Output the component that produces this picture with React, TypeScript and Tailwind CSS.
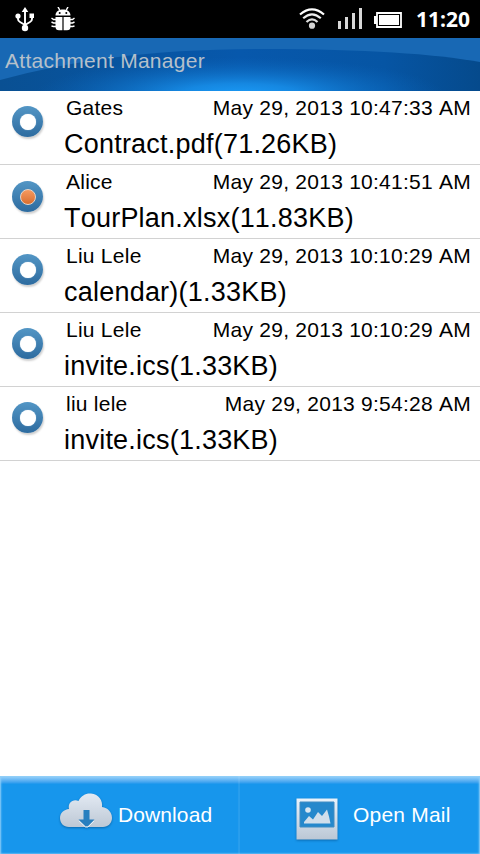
const items = [
  { from: 'Gates', date: 'May 29, 2013 10:47:33 AM', file: 'Contract.pdf(71.26KB)' },
  { from: 'Alice', date: 'May 29, 2013 10:41:51 AM', file: 'TourPlan.xlsx(11.83KB)', selected: true },
  { from: 'Liu Lele', date: 'May 29, 2013 10:10:29 AM', file: 'calendar)(1.33KB)' },
  { from: 'Liu Lele', date: 'May 29, 2013 10:10:29 AM', file: 'invite.ics(1.33KB)' },
  { from: 'liu lele', date: 'May 29, 2013 9:54:28 AM', file: 'invite.ics(1.33KB)' },
];

function UsbIcon() {
  return (
    <svg className="ml-[15px]" width="20" height="25" viewBox="0 0 20 25" fill="none" stroke="white" strokeWidth="1.9">
      <path d="M10 4v18M3 9v3q0 2 2 3l5 3M17 9v3q0 2-2 3l-5 3" />
      <path d="M10 0l3.300 5H6.700zM14.500 6.500h4.500v4.500h-4.500z" fill="white" stroke="none" />
      <circle cx="3" cy="9" r="2.600" fill="white" stroke="none" />
      <circle cx="10" cy="21" r="3.200" fill="white" stroke="none" />
    </svg>
  );
}

function BugIcon() {
  return (
    <svg className="ml-4" width="24" height="25" viewBox="0 0 24 25" fill="white">
      <path d="M4.500 8.500C4.500 4.500 8 2.500 12 2.500s7.500 2 7.500 6zM4.500 10h6.900v13.300H8a3.500 3.500 0 0 1-3.500-3.500zM12.600 10h6.900v9.800a3.500 3.500 0 0 1-3.500 3.500h-3.400z" />
      <path d="M7 0l2 3.500M17 0l-2 3.500M.5 11l2 1.500h3M.5 15l2 1h3M.5 19l2 .5h3M23.500 11l-2 1.500h-3M23.500 15l-2 1h-3M23.500 19l-2 .5h-3" fill="none" stroke="white" strokeWidth="1.500" />
      <circle cx="8.700" cy="6" r="1" fill="black" />
      <circle cx="15.300" cy="6" r="1" fill="black" />
    </svg>
  );
}

function StatusBar() {
  return (
    <header className="flex h-[38px] shrink-0 items-center bg-black">
      <UsbIcon />
      <BugIcon />
      <svg className="ml-auto" width="26" height="24" viewBox="0 0 26 24" fill="none" stroke="#eeeeee" strokeWidth="2.200">
        <path d="M1 7.500Q13-2.700 25 7.500" stroke="white" />
        <path d="M4.200 11.300Q13 3.500 21.800 11.300" />
        <path d="M7.500 15Q13 9.800 18.500 15" stroke="#dddddd" />
        <circle cx="13" cy="18.700" r="3.100" fill="#d4d4d4" stroke="none" />
      </svg>
      <svg className="ml-[13px]" width="25" height="22" viewBox="0 0 25 22">
        <path d="M0 13h3v8H0zM7 9h3v12H7zM14 5h3v16h-3zM21 0h3v21h-3z" fill="#d8d8d8" />
      </svg>
      <svg className="ml-[11px] mt-px" width="28" height="16" viewBox="0 0 28 16">
        <path d="M3 1h24v14H3z" fill="black" stroke="white" strokeWidth="1.800" />
        <path d="M0 4h3v8H0zM5 3h20v10H5z" fill="white" />
      </svg>
      <span className="ml-[14px] mr-[9px] w-[55px] whitespace-nowrap font-['Open_Sans','Noto_Sans',sans-serif] text-[21px] font-bold leading-6 text-white">11:20</span>
    </header>
  );
}

function TitleBar() {
  return (
    <div className="relative h-[53px] shrink-0 overflow-hidden bg-[#1868b4]">
      <svg className="absolute inset-0" width="480" height="53" viewBox="0 0 480 53" preserveAspectRatio="none" aria-hidden="true">
        <defs>
          <linearGradient id="band">
            <stop offset="0" stopColor="#095093" />
            <stop offset=".5" stopColor="#0758ac" />
            <stop offset=".8" stopColor="#0655a4" />
            <stop offset="1" stopColor="#054a8c" />
          </linearGradient>
          <radialGradient id="glow" gradientUnits="userSpaceOnUse" cx="0" cy="0" r="1" gradientTransform="translate(240 57) scale(205 38)">
            <stop offset="0" stopColor="#1b9cf8" />
            <stop offset=".3" stopColor="#1890eb" stopOpacity=".85" />
            <stop offset="1" stopColor="#0c67bd" stopOpacity="0" />
          </radialGradient>
        </defs>
        <path d="M0 42C75 22 150 11 265 11C365 11 435 16 480 24V53H0z" fill="url(#band)" />
        <rect width="480" height="53" fill="url(#glow)" />
      </svg>
      <h1 className="relative pl-[5px] pt-[11px] text-[21px] leading-6 tracking-[.28px] text-[#b5c0cb]">Attachment Manager</h1>
    </div>
  );
}

function Radio({ selected }: { selected?: boolean }) {
  return (
    <span className={`ml-3 flex size-[31px] shrink-0 items-center justify-center rounded-full bg-linear-to-b from-[#5396c5] to-[#2d6b9f] shadow-[1px_2px_2px_#00000030] ${selected ? 'mt-4' : 'mt-[15px]'}`}>
      {selected ? (
        <span className="size-4 rounded-full border border-[#e8d6c8] bg-linear-to-b from-[#f69a5f] to-[#d96e2e]" />
      ) : (
        <span className="size-4 rounded-full bg-white shadow-[0_0_1px_#d8e9f5]" />
      )}
    </span>
  );
}

function CloudIcon() {
  return (
    <svg className="-ml-px drop-shadow-[0_1px_1px_#0968ad]" width="54" height="37" viewBox="0 0 54 37">
      <defs>
        <linearGradient id="cloud" x2="0" y2="1">
          <stop stopColor="#e3eaf3" />
          <stop offset="1" stopColor="#bdc8d5" />
        </linearGradient>
      </defs>
      <path d="M10 35C4.500 35 1 31 1 26C1 21 5 17.500 10 17C8.500 11 14 6.500 19.500 9C22 3.500 27 1 32 1.500C40 2 44 9 43 15C49 16 53 20 53 26C53 31 49 35 44 35z" fill="url(#cloud)" />
      <path d="M24.500 18h6v9.500h5L28.500 34.500H26.500L19.500 27.500h5z" fill="#287fbf" />
      <path d="M20 29l6.500 6h2.500l6-6" fill="none" stroke="#e5f0f8" />
    </svg>
  );
}

function PhotoIcon() {
  return (
    <svg className="drop-shadow-[0_1px_1px_#0968ad]" width="42" height="42" viewBox="0 0 42 42">
      <defs>
        <linearGradient id="photo" x2="0" y2="1">
          <stop stopColor="#e9f3fc" />
          <stop offset="1" stopColor="#bbc7d5" />
        </linearGradient>
      </defs>
      <path d="M.5.500h41v41H.5z" fill="url(#photo)" />
      <path d="M4 4h34v25H4z" fill="#2588cc" stroke="#408cc2" />
      <circle cx="12" cy="12" r="2.800" fill="#d9e6f1" />
      <path d="M8 25.500V24l5-6 4 3.500 5-7.500 4 4 5-6.500 2 7 1.500 7z" fill="#d0deeb" />
    </svg>
  );
}

export default function App() {
  return (
    <div className="flex h-[854px] w-[480px] flex-col overflow-hidden bg-white font-['Liberation_Sans',Arial,sans-serif] text-black [font-kerning:none]">
      <StatusBar />
      <TitleBar />
      <main className="flex-1">
        {items.map((item, index) => (
          <article key={index} className="flex h-[74px] border-b border-[#d2d2d2]">
            <Radio selected={item.selected} />
            <div className="ml-[21px] min-w-0 flex-1 pt-[5px]">
              <div className="flex justify-between pl-[2px] pr-[9px] text-[21px] leading-6 tracking-[.25px]">
                <span>{item.from}</span>
                <time>{item.date}</time>
              </div>
              <div className="mt-[7px] whitespace-nowrap text-[27px] leading-[34px] tracking-[.22px]">{item.file}</div>
            </div>
          </article>
        ))}
      </main>
      <footer className="grid h-[78px] shrink-0 grid-cols-2 bg-[#1796ec] bg-linear-to-b from-[#9bd4fa] to-[#1796ec] to-[8px] text-[21px] leading-6 tracking-[.1px] text-white shadow-[inset_1px_0_2px_#8fcef8,inset_-1px_0_2px_#8fcef8]">
        <button className="flex pl-[60px] pt-4 shadow-[inset_-2px_0_1px_#ffffff14]">
          <CloudIcon />
          <span className="ml-[5px] mt-[11px]">Download</span>
        </button>
        <button className="flex pl-14 pt-[22px]">
          <PhotoIcon />
          <span className="ml-[15px] mt-[5px] tracking-[.2px]">Open Mail</span>
        </button>
      </footer>
    </div>
  );
}
